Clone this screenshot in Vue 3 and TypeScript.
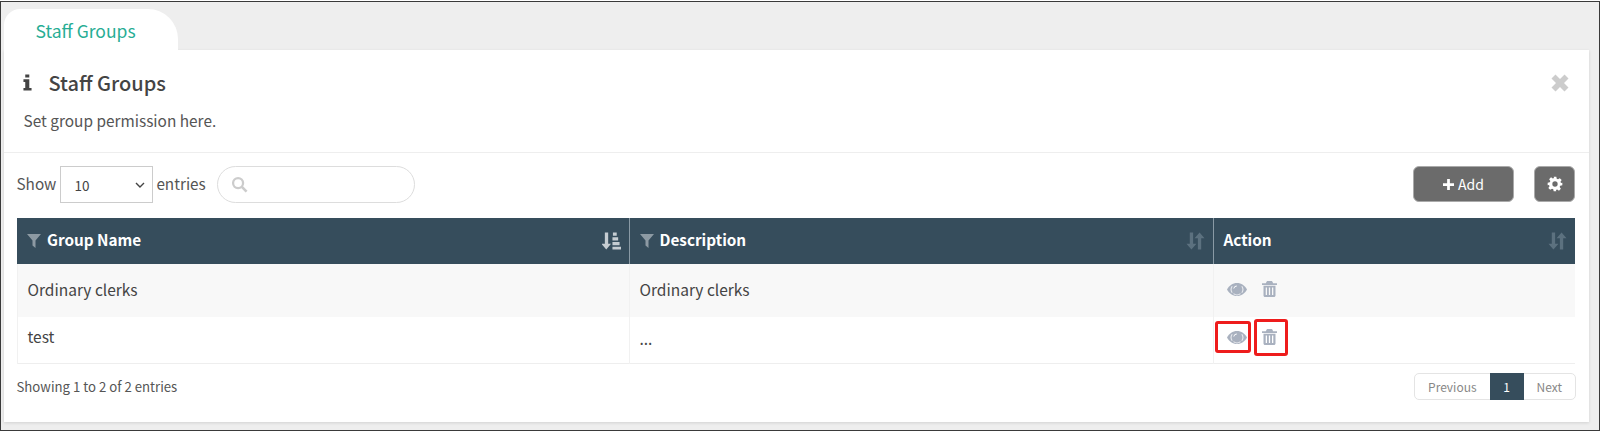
<script setup lang="ts">
interface Row { name: string; desc: string; marked: boolean }
const rows: Row[] = [
  { name: 'Ordinary clerks', desc: 'Ordinary clerks', marked: false },
  { name: 'test', desc: '...', marked: true },
]
</script>

<template>
  <div class="frame">
    <div class="tabs"><div class="tab">Staff Groups</div></div>
    <div class="card">
      <section class="notice">
        <div class="notice-head">
          <svg class="info" viewBox="0 0 10 18" width="9" height="17"><path fill="#444" d="M2.500 0h4.500v3.500H2.500zM0.500 5.500h6.500v9.500h2.500v3H0.500v-3h2v-6.500h-2z"/></svg>
          <h1>Staff Groups</h1>
          <svg class="close" viewBox="0 0 18 18" width="18" height="18"><path fill="#ccc" d="M4.500 0.500L9 5l4.500-4.500 4 4L13 9l4.500 4.500-4 4L9 13l-4.500 4.500-4-4L5 9 .5 4.500z"/></svg>
        </div>
        <p>Set group permission here.</p>
      </section>
      <section class="body">
        <div class="toolbar">
          <span class="lbl">Show</span>
          <div class="select"><span>10</span><svg viewBox="0 0 10 6" width="10" height="6"><path d="M1 1l4 4 4-4" fill="none" stroke="#444" stroke-width="1.400"/></svg></div>
          <span class="lbl">entries</span>
          <div class="search"><svg viewBox="0 0 18 18" width="17" height="17"><circle cx="7.500" cy="7.500" r="5.300" fill="none" stroke="#ccc" stroke-width="2.400"/><path d="M11.500 11.500l5 5" stroke="#ccc" stroke-width="2.800"/></svg></div>
          <div class="spacer"></div>
          <button class="btn add"><svg viewBox="0 0 12 12" width="11" height="11"><path fill="#fff" d="M4.500 0h3v4.500H12v3H7.500V12h-3V7.500H0v-3h4.500z"/></svg>Add</button>
          <button class="btn gear"><svg viewBox="0 0 24 24" width="16" height="16"><path fill="#fff" fill-rule="evenodd" d="M10 1h4l.6 3.200 1.900.8 2.700-1.800 2.800 2.800-1.800 2.700.8 1.900L23 10v4l-3.200.6-.8 1.900 1.800 2.700-2.800 2.800-2.700-1.800-1.900.8L14 23h-4l-.6-3.200-1.900-.8-2.700 1.800L2 18l1.800-2.700-.8-1.900L1 14v-4l3.200-.6.8-1.900L3.200 4.800 6 2l2.700 1.800 1.900-.8zM12 8a4 4 0 1 0 0 8 4 4 0 0 0 0-8z"/></svg></button>
        </div>
        <table>
          <colgroup><col class="c1" /><col class="c2" /><col /></colgroup>
          <thead>
            <tr>
              <th>
                <div class="th"><svg class="funnel" viewBox="0 0 14 14" width="14" height="14"><path fill="#8d9aa3" d="M0 0h14L8.500 6.500V14L5.500 11.500V6.500z"/></svg><span class="lab">Group Name</span>
                  <svg class="sort" viewBox="0 0 20 18" width="19" height="18"><path fill="#c5ccd1" d="M3 0h3.500v12h3l-5 6-5-6h3.500zM11.500 0h4v3.500h-4zM11 5h6v3.500h-6zM11 10h7.500v3.500H11zM11 15h9v3h-9z"/></svg></div>
              </th>
              <th>
                <div class="th"><svg class="funnel" viewBox="0 0 14 14" width="14" height="14"><path fill="#8d9aa3" d="M0 0h14L8.500 6.500V14L5.500 11.500V6.500z"/></svg><span class="lab">Description</span>
                  <svg class="sort" viewBox="0 0 20 18" width="19" height="18"><path fill="#5c717f" d="M4 0h3.500v12h3.500l-5.300 6L0.500 12H4zM12.500 18h3.500V6h3.500L14.300 0 9 6h3.500z"/></svg></div>
              </th>
              <th>
                <div class="th"><span class="lab">Action</span>
                  <svg class="sort" viewBox="0 0 20 18" width="19" height="18"><path fill="#5c717f" d="M4 0h3.500v12h3.500l-5.300 6L0.500 12H4zM12.500 18h3.500V6h3.500L14.300 0 9 6h3.500z"/></svg></div>
              </th>
            </tr>
          </thead>
          <tbody>
            <tr v-for="r in rows" :key="r.name">
              <td>{{ r.name }}</td>
              <td><span :class="{ dots: r.desc === '...' }">{{ r.desc }}</span></td>
              <td>
                <div class="actions">
                  <span class="act eye" :class="{ marked: r.marked }"><svg viewBox="0 0 20 13" width="20" height="13"><path fill="#a9b1bf" d="M10 0c4.300 0 7.800 2.500 10 6.500C17.800 10.500 14.300 13 10 13S2.200 10.500 0 6.500C2.200 2.500 5.700 0 10 0z"/><path fill="none" stroke="#e9ebef" stroke-width="1.100" d="M5.200 3.200a5.700 5.700 0 0 0 0 6.600M14.800 3.200a5.700 5.700 0 0 1 0 6.600M6.500 10.600a5.700 5.700 0 0 0 7 0"/><path d="M6.800 5.500a3 3 0 0 1 3-2.500" stroke="#fff" stroke-width="1" fill="none"/></svg></span>
                  <span class="act trash" :class="{ marked: r.marked }"><svg viewBox="0 0 15 16" width="15" height="16"><path fill="#a9b1bf" fill-rule="evenodd" d="M5 0h5l1.200 2.200H15v1.800H0V2.200h3.800zM1.500 4.800h12v9.700c0 .8-.7 1.500-1.500 1.500H3c-.8 0-1.500-.7-1.500-1.500zM3.700 6.500v7.500h1.300V6.500zM6.850 6.500v7.500h1.300V6.500zM10 6.500v7.500h1.300V6.500z"/></svg></span>
                </div>
              </td>
            </tr>
          </tbody>
        </table>
        <div class="foot">
          <span class="info-text">Showing 1 to 2 of 2 entries</span>
          <div class="pager">
            <span class="pg">Previous</span>
            <span class="pg cur">1</span>
            <span class="pg">Next</span>
          </div>
        </div>
      </section>
    </div>
  </div>
</template>

<style>
html, body { margin: 0; height: 433px; overflow: hidden; background: #fff; }
</style>

<style scoped>
.frame {
  box-sizing: border-box; width: 1600px; height: 430px; margin-top: 1px; padding: 6.500px 10px 0 2.500px;
  border: 1.500px solid #3a3a3a; background: #eee;
  font-family: "Noto Sans CJK SC", "Noto Sans", sans-serif; color: #444; font-size: 14px;
}
.tabs { height: 41px; display: flex; }
.tab {
  box-sizing: border-box; width: 174px; height: 41px; background: #fff; color: #27ad94;
  font-size: 17.500px; line-height: 43px; padding-left: 32px; border-radius: 16px 30px 0 0;
}
.card { height: 372px; background: #fff; box-shadow: 0 1px 3px rgba(0,0,0,.12); }
.notice { height: 103px; box-sizing: border-box; border-bottom: 1px solid #eee; padding: 19px 20px 0 19px; }
.notice-head { display: flex; align-items: center; height: 28px; }
h1 { margin: 0 0 0 17px; font-size: 20px; font-weight: 500; color: #444; flex: 1; }
p { margin: 13px 0 0 1px; font-size: 15.400px; line-height: 20px; color: #555; }
.body { padding: 0 14px 0 13px; }
.toolbar { height: 65px; display: flex; align-items: center; box-sizing: border-box; padding-bottom: 2px; }
.lbl { font-size: 15.300px; color: #555; margin-bottom: 2px; }
.select {
  box-sizing: border-box; width: 93px; height: 37px; margin: 0 3px 0 4px; border: 1px solid #ccc;
  display: flex; align-items: center; justify-content: space-between; padding: 2px 7px 0 13px; font-size: 13.500px;
}
.search {
  box-sizing: border-box; width: 198px; height: 37px; margin-left: 11px; border: 1px solid #ddd;
  border-radius: 19px; display: flex; align-items: center; padding-left: 13px;
}
.spacer { flex: 1; }
.btn { border: 1px solid #aaa; background: #6b6b6b; color: #fff; border-radius: 6px; height: 36px; padding: 0; display: flex; align-items: center; justify-content: center; font: inherit; font-size: 14px; }
.add { width: 101px; gap: 4px; margin-right: 20px; }
.gear { width: 41px; }
table { width: 100%; border-collapse: collapse; table-layout: fixed; font-size: 15.500px; }
.c1 { width: 612px; }
.c2 { width: 584px; }
thead tr { background: #364d5c; height: 46px; }
th { padding: 0 0 0 10px; color: #fff; font-size: 15.300px; font-weight: 700; text-align: left; border-right: 1px solid #8a9aa5; }
th:last-child { border-right: 0; }
.th { display: flex; align-items: center; gap: 6px; }
.lab { margin-bottom: 4px; }
.funnel { margin-top: 1px; }
.sort { margin-left: auto; margin-right: 8px; }
tbody tr:first-child { background: #f8f8f8; height: 53px; }
tbody tr:first-child td { padding-bottom: 2px; }
tbody tr:last-child { height: 47px; border-bottom: 1px solid #eee; }
tbody tr:last-child td { padding-bottom: 7px; }
tbody tr:last-child .actions { margin-top: 2px; }
.dots { display: inline-block; margin-top: 4px; }
td { padding: 0 0 0 10px; color: #444; border-right: 1px solid #f1f1f1; }
td:first-child { border-left: 1px solid #f1f1f1; }
td:last-child { border-right: 0; }
.actions { display: flex; align-items: center; margin-left: -9px; gap: 3px; }
.act { display: flex; align-items: center; box-sizing: border-box; border: 3px solid transparent; border-radius: 3px; }
.eye { width: 36px; height: 32px; padding-left: 9px; }
.trash { width: 34px; height: 37px; padding-left: 5px; }
.act.marked { border-color: #ee1c1c; }
.foot { display: flex; justify-content: space-between; align-items: center; padding-top: 9px; }
.info-text { font-size: 13.200px; color: #555; }
.pager { display: flex; border: 1px solid #e4e4e4; border-radius: 5px; height: 25px; margin-right: -1px; align-items: stretch; }
.pg { font-size: 12px; color: #888; padding: 0 13px; display: flex; align-items: center; }
.pg.cur { background: #364d5c; color: #fff; width: 34px; box-sizing: border-box; justify-content: center; padding: 0; margin: -1px 0; }
</style>
